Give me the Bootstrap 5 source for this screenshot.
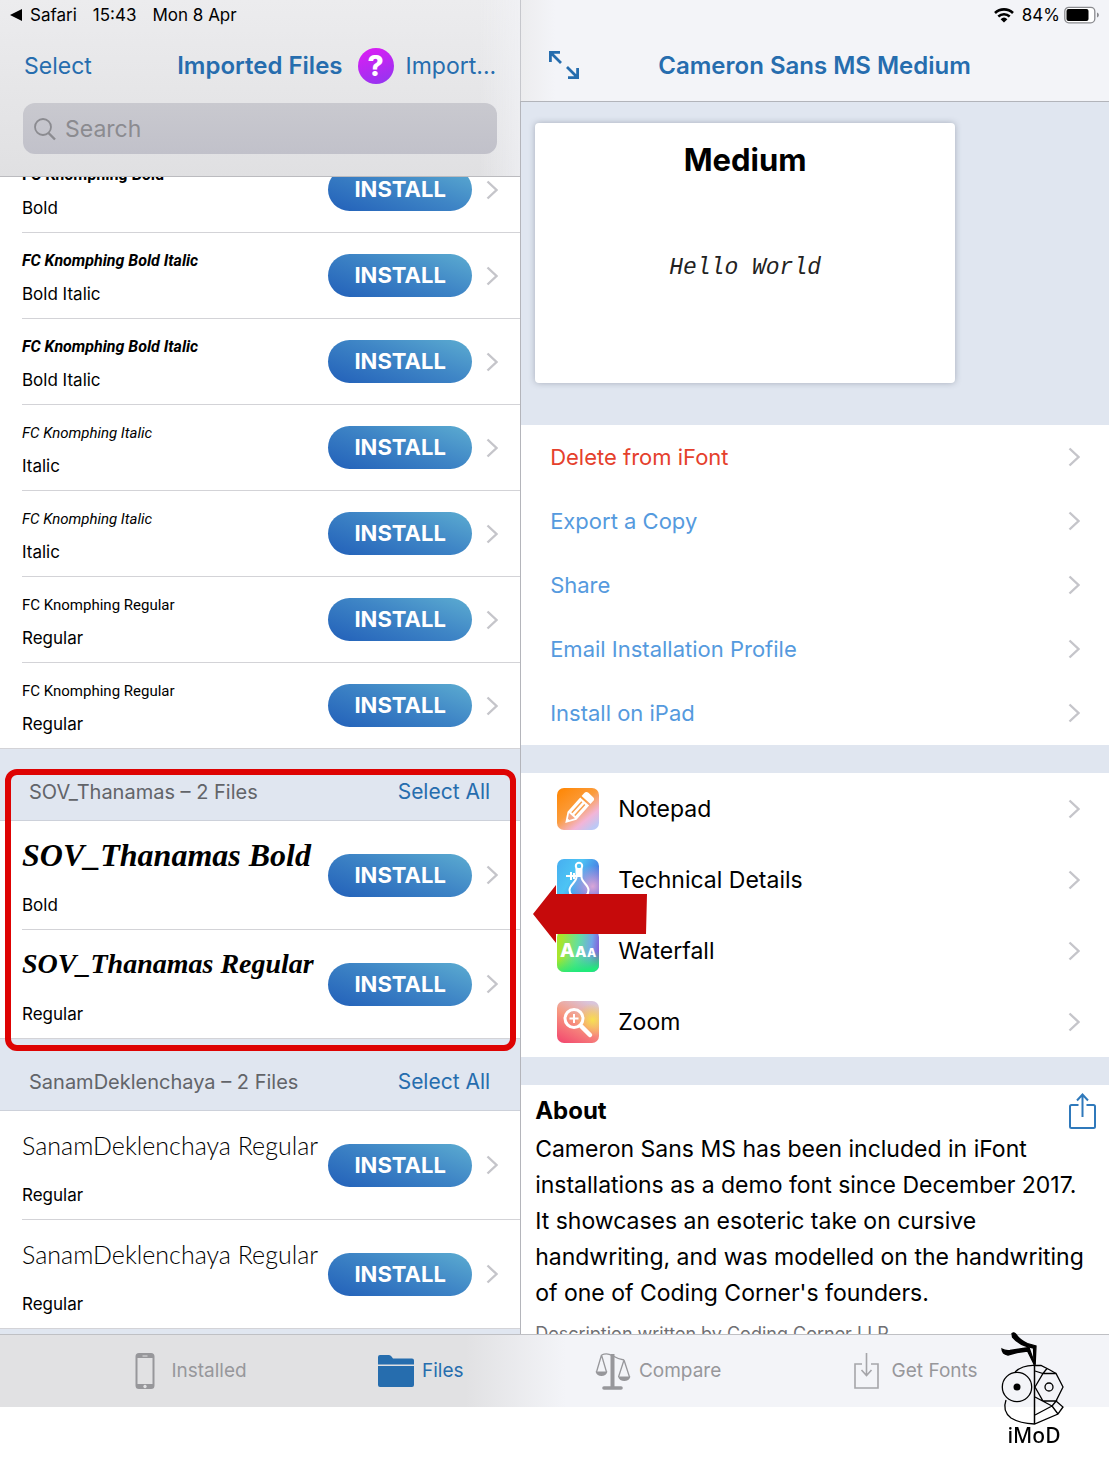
<!DOCTYPE html>
<html lang="en">
<head>
<meta charset="utf-8">
<meta name="viewport" content="width=device-width, initial-scale=1">
<title>iFont – Imported Files</title>
<link href="https://cdn.jsdelivr.net/npm/bootstrap@5.3.0/dist/css/bootstrap.min.css" rel="stylesheet">
<style>
:root{--blue:#266dae;--sky:#559ade;--group:#e0e6f0;--line:#d3d3d7;--bar:#f3f4f8}
body{font-family:Inter,"Liberation Sans",sans-serif;color:#000;background:#fff;font-size:22px;line-height:28px}
a{text-decoration:none}
.app-shell{height:calc(100vh - 72px);min-height:900px}
.split-view{display:grid;grid-template-columns:53fr 60fr;min-height:0}
.pane{min-width:0;min-height:0}
.pane-detail{box-shadow:inset 1px 0 #b4b5bb}
.pane-body{margin-left:1px}
.status-line{font-size:17px;line-height:20px;height:29px;padding:0 8px 0 10px}
.title-line{height:74px}
.bar-files{background:linear-gradient(90deg,rgba(243,244,248,0) 92%,rgba(243,244,248,.6)),linear-gradient(#ececee,#e0e0e2);border-bottom:1px solid #bbbbbf;height:177px}
.bar-detail{background:linear-gradient(90deg,#ececee,var(--bar) 6%);border-bottom:1px solid #b2b4ba;height:102px;box-shadow:inset 1px 0 #c6c7cc}
.text-app{color:var(--blue)}
.app-title{font-size:24px;line-height:28px;font-weight:600;margin:0}
.plain-btn{border:0;background:none;padding:0;color:var(--blue)}
.title-line .plain-btn{font-size:23px}
.expand-btn{position:absolute;left:28px}
.help-btn{width:36px;height:36px;border:0;border-radius:50%;padding:0;margin:0 12px 0 15px;background:linear-gradient(160deg,#e01cf4,#8f36f0);color:#fff;font-weight:800;font-size:28px;line-height:36px}
.search-box{height:51px;margin:0 23px;border-radius:12px;background:linear-gradient(#c9c9cf,#c1c1ca);color:#8b8b90}
.search-box input{border:0;background:none;outline:0;font-size:23px;min-width:0}
.search-box input::placeholder{color:#8b8b90;opacity:1}
.scroll-area{overflow:hidden;background:#fff}
.scrolled{margin-top:-30px}
.font-row{height:86px;margin-left:22px;padding-right:22px;border-bottom:1px solid var(--line);gap:14px}
.font-row.tall{height:109px}
.font-row:last-child{margin-left:0;padding-left:22px}
.row-text{gap:7px;min-width:0;width:0;padding-bottom:2px}
.tall .row-text{gap:18px}
.face{line-height:32px;white-space:nowrap}
.tall .face{line-height:44px}
.style-name{font-size:17px;line-height:20px}
.face-knom{font-family:Roboto,sans-serif;font-size:15px}
.face-knom.fw-bold{font-size:16px}
.face-sov{font-family:"Liberation Serif",serif;font-style:italic;font-weight:700;font-size:32px}
.face-sov.compact{font-size:28px}
.face-sanam{font-family:Lato,sans-serif;font-weight:300;font-size:25px}
.install-btn{width:144px;height:43px;border:0;border-radius:22px;padding:0;flex:none;color:#fff;font-weight:700;font-size:22px;line-height:43px;background:linear-gradient(20deg,#2260b9,#3f86c6 55%,#5cacd1)}
.group-head{height:72px;background:var(--group);border-bottom:1px solid #cdd1da;padding:14px 30px 0 29px}
.group-head h2{font-size:20px;line-height:28px;margin:0;font-weight:400;color:#626469}
.group-head .plain-btn{font-size:21px}
.group-mark{position:absolute;inset:-52px 4px -12px 5px;border:6px solid #de0303;border-radius:12px;pointer-events:none}
.detail-bg{background:var(--group)}
.hero{padding:21px 14px 42px 14px}
.preview-card{width:75%;height:260px;border:0;border-radius:4px;box-shadow:0 0 6px rgba(60,70,90,.35)}
.preview-card h2{font-size:31px;line-height:36px;font-weight:700;margin:19px 0 0}
.hello{font-family:"Liberation Mono",monospace;font-style:italic;font-size:23px;line-height:32px;margin:74px 0 0;color:#222}
.action-row{height:64px;padding:0 29px;color:var(--sky)}
.action-row.danger{color:#e5402c}
.tool-row{height:71px;padding:0 29px 0 36px;gap:19px;color:#000;font-size:23px}
.gap-block{height:28px}
.tool-icon{width:42px;height:42px;flex:none}
.pointer-arrow{position:absolute;left:12px;top:112px;width:114px;height:58px}
.about{padding:7px 12px 0 14px}
.about h2{font-size:24px;line-height:36px;font-weight:700;margin:0}
.about p{font-size:23px;line-height:36px;margin:1px 8px 0 0}
.about .credit{font-size:18px;line-height:24px;color:#6f6f73;margin-top:11px;white-space:nowrap}
.tab-strip{height:73px;flex:none;background:linear-gradient(90deg,#e1e1e3 42%,var(--bar) 51%);border-top:1px solid #bfc0c4;font-size:19px}
.tab-strip a{color:#97979b}
.tab-strip a.current{color:var(--blue)}
.brand-mark{position:fixed;right:38px;bottom:28px;width:75px;height:122px}
</style>
<script src="https://cdn.jsdelivr.net/npm/bootstrap@5.3.0/dist/js/bootstrap.bundle.min.js"></script>
</head>
<body>
<svg width="0" height="0" class="position-absolute" aria-hidden="true">
  <symbol id="chev" viewBox="0 0 12 20"><path d="M1.500 1.500 10.500 10l-9 8.500" fill="none" stroke="#c5c5ca" stroke-width="2.400"/></symbol>
</svg>
<div class="app-shell d-flex flex-column">
  <div class="split-view flex-grow-1">
    <section class="pane d-flex flex-column">
      <header class="bar-files flex-shrink-0">
        <div class="status-line d-flex align-items-center">
          <svg width="12" height="12" viewBox="0 0 12 12" aria-hidden="true"><path d="M0 6 12 0v12z"/></svg>
          <span class="ms-2">Safari</span><span class="ms-3">15:43</span><span class="ms-3">Mon 8 Apr</span>
        </div>
        <div class="title-line d-flex align-items-center px-4">
          <button class="plain-btn">Select</button>
          <h1 class="app-title text-app ms-auto">Imported Files</h1>
          <button class="help-btn" aria-label="Help">?</button>
          <button class="plain-btn">Import...</button>
        </div>
        <label class="search-box d-flex align-items-center">
          <svg class="ms-2 me-2 flex-shrink-0" width="26" height="26" viewBox="0 0 26 26" fill="none" stroke="#8b8b90" stroke-width="1.800" aria-hidden="true"><circle cx="12" cy="11" r="8"/><path d="m17.500 17 6.500 6.500" stroke-width="2.400"/></svg>
          <input class="flex-grow-1 p-0" type="search" placeholder="Search" aria-label="Search">
        </label>
      </header>
      <div class="scroll-area flex-grow-1">
        <ul class="list-unstyled scrolled mb-0">
          <li class="font-row d-flex align-items-center"><div class="row-text d-flex flex-column flex-grow-1"><span class="face face-knom fw-bold">FC Knomphing Bold</span><span class="style-name">Bold</span></div><button class="install-btn">INSTALL</button><svg width="12" height="20"><use href="#chev"/></svg></li>
          <li class="font-row d-flex align-items-center"><div class="row-text d-flex flex-column flex-grow-1"><span class="face face-knom fw-bold fst-italic">FC Knomphing Bold Italic</span><span class="style-name">Bold Italic</span></div><button class="install-btn">INSTALL</button><svg width="12" height="20"><use href="#chev"/></svg></li>
          <li class="font-row d-flex align-items-center"><div class="row-text d-flex flex-column flex-grow-1"><span class="face face-knom fw-bold fst-italic">FC Knomphing Bold Italic</span><span class="style-name">Bold Italic</span></div><button class="install-btn">INSTALL</button><svg width="12" height="20"><use href="#chev"/></svg></li>
          <li class="font-row d-flex align-items-center"><div class="row-text d-flex flex-column flex-grow-1"><span class="face face-knom fst-italic">FC Knomphing Italic</span><span class="style-name">Italic</span></div><button class="install-btn">INSTALL</button><svg width="12" height="20"><use href="#chev"/></svg></li>
          <li class="font-row d-flex align-items-center"><div class="row-text d-flex flex-column flex-grow-1"><span class="face face-knom fst-italic">FC Knomphing Italic</span><span class="style-name">Italic</span></div><button class="install-btn">INSTALL</button><svg width="12" height="20"><use href="#chev"/></svg></li>
          <li class="font-row d-flex align-items-center"><div class="row-text d-flex flex-column flex-grow-1"><span class="face face-knom">FC Knomphing Regular</span><span class="style-name">Regular</span></div><button class="install-btn">INSTALL</button><svg width="12" height="20"><use href="#chev"/></svg></li>
          <li class="font-row d-flex align-items-center"><div class="row-text d-flex flex-column flex-grow-1"><span class="face face-knom">FC Knomphing Regular</span><span class="style-name">Regular</span></div><button class="install-btn">INSTALL</button><svg width="12" height="20"><use href="#chev"/></svg></li>
        </ul>
        <div class="group-head d-flex justify-content-between align-items-center"><h2>SOV_Thanamas – 2 Files</h2><button class="plain-btn">Select All</button></div>
        <div class="position-relative">
          <ul class="list-unstyled mb-0">
            <li class="font-row tall d-flex align-items-center"><div class="row-text d-flex flex-column flex-grow-1"><span class="face face-sov">SOV_Thanamas Bold</span><span class="style-name">Bold</span></div><button class="install-btn">INSTALL</button><svg width="12" height="20"><use href="#chev"/></svg></li>
            <li class="font-row tall d-flex align-items-center"><div class="row-text d-flex flex-column flex-grow-1"><span class="face face-sov compact">SOV_Thanamas Regular</span><span class="style-name">Regular</span></div><button class="install-btn">INSTALL</button><svg width="12" height="20"><use href="#chev"/></svg></li>
          </ul>
          <div class="group-mark" aria-hidden="true"></div>
        </div>
        <div class="group-head d-flex justify-content-between align-items-center"><h2>SanamDeklenchaya – 2 Files</h2><button class="plain-btn">Select All</button></div>
        <ul class="list-unstyled mb-0">
          <li class="font-row tall d-flex align-items-center"><div class="row-text d-flex flex-column flex-grow-1"><span class="face face-sanam">SanamDeklenchaya Regular</span><span class="style-name">Regular</span></div><button class="install-btn">INSTALL</button><svg width="12" height="20"><use href="#chev"/></svg></li>
          <li class="font-row tall d-flex align-items-center"><div class="row-text d-flex flex-column flex-grow-1"><span class="face face-sanam">SanamDeklenchaya Regular</span><span class="style-name">Regular</span></div><button class="install-btn">INSTALL</button><svg width="12" height="20"><use href="#chev"/></svg></li>
        </ul>
        <div class="group-head"></div>
      </div>
    </section>

    <section class="pane d-flex flex-column">
      <header class="bar-detail flex-shrink-0">
        <div class="status-line d-flex align-items-center justify-content-end gap-1">
          <svg width="20" height="16" viewBox="0 0 20 16" fill="none" stroke="#000" stroke-width="2.600" aria-hidden="true"><path d="M1 6a13 13 0 0 1 18 0M4.300 9.500a8.500 8.500 0 0 1 11.400 0"/><path d="m10 15.500-3.400-3.300a5 5 0 0 1 6.800 0z" fill="#000" stroke="none"/></svg>
          <span class="ms-1">84%</span>
          <svg width="37" height="18" viewBox="0 0 37 18" aria-hidden="true"><rect x=".8" y="1.300" width="30" height="15.500" rx="4" fill="#fff" stroke="#8a8b8f" stroke-width="1.300"/><rect x="2.500" y="3" width="22" height="12" rx="2"/><path d="M33 6.500c2.500.8 2.500 4.200 0 5z" fill="#8a8b8f"/></svg>
        </div>
        <div class="title-line d-flex align-items-center position-relative">
          <button class="plain-btn expand-btn d-flex" aria-label="Full screen"><svg width="32" height="32" viewBox="0 0 32 32" fill="none" stroke="#266dae" stroke-width="2.800"><path d="M2.400 12V2.400H12M3 3l10 10M29.600 18v9.600H20M29 27 19 17"/></svg></button>
          <h1 class="app-title text-app mx-auto">Cameron Sans MS Medium</h1>
        </div>
      </header>
      <div class="scroll-area pane-detail flex-grow-1">
        <div class="pane-body">
        <div class="detail-bg hero">
          <div class="preview-card card text-center"><h2>Medium</h2><p class="hello">Hello World</p></div>
        </div>
        <nav aria-label="Actions">
          <a href="#" class="action-row danger d-flex align-items-center justify-content-between">Delete from iFont<svg width="12" height="20"><use href="#chev"/></svg></a>
          <a href="#" class="action-row d-flex align-items-center justify-content-between">Export a Copy<svg width="12" height="20"><use href="#chev"/></svg></a>
          <a href="#" class="action-row d-flex align-items-center justify-content-between">Share<svg width="12" height="20"><use href="#chev"/></svg></a>
          <a href="#" class="action-row d-flex align-items-center justify-content-between">Email Installation Profile<svg width="12" height="20"><use href="#chev"/></svg></a>
          <a href="#" class="action-row d-flex align-items-center justify-content-between">Install on iPad<svg width="12" height="20"><use href="#chev"/></svg></a>
        </nav>
        <div class="gap-block detail-bg"></div>
        <nav class="position-relative" aria-label="Tools">
          <a href="#" class="tool-row d-flex align-items-center">
            <svg class="tool-icon" viewBox="0 0 42 42"><defs><linearGradient id="n1" x2=".8" y2="1"><stop stop-color="#ff8500"/><stop offset=".5" stop-color="#fb9c3c"/><stop offset=".8" stop-color="#f2b5d8"/><stop offset="1" stop-color="#bcc8f5"/></linearGradient></defs><rect width="42" height="42" rx="7" fill="url(#n1)"/><g transform="rotate(42 21 21)"><path d="M15 5q0-3 3-3h6q3 0 3 3v4H15zM15 11h12v19l-6 10-6-10z" fill="#fff"/><path d="M19 13v15M23 13v15" stroke="#f9a04e" stroke-width="1.500"/><path d="M17 30h8l-3 5h-2z" fill="#f6a884"/></g></svg>
            <span class="me-auto">Notepad</span><svg width="12" height="20"><use href="#chev"/></svg></a>
          <a href="#" class="tool-row d-flex align-items-center">
            <svg class="tool-icon" viewBox="0 0 42 42"><defs><linearGradient id="t1" y2=".6"><stop stop-color="#47aef0"/><stop offset=".45" stop-color="#4dc4f4"/><stop offset="1" stop-color="#465fdc"/></linearGradient><radialGradient id="t2" cx=".85" cy=".65" r=".5"><stop stop-color="#d9a6d8"/><stop offset="1" stop-color="#d9a6d8" stop-opacity="0"/></radialGradient></defs><rect width="42" height="42" rx="7" fill="url(#t1)"/><rect width="42" height="42" rx="7" fill="url(#t2)"/><g fill="none" stroke="#fff" stroke-width="2"><circle cx="22" cy="7" r="3.200"/><path d="M19.500 10v8c0 5-7 8-7 13 0 5 4 7 9.500 7s9.500-2 9.500-7-7-8-7-13v-8z"/><path d="M9 17h10M14 13v8M17 14v6"/></g><path d="M20 10h4v8h-4z" fill="#fff"/></svg>
            <span class="me-auto">Technical Details</span><svg width="12" height="20"><use href="#chev"/></svg></a>
          <a href="#" class="tool-row d-flex align-items-center">
            <svg class="tool-icon" viewBox="0 0 42 42"><defs><linearGradient id="w1" x1=".1" y1=".3" x2="1" y2=".4"><stop stop-color="#a7e52e"/><stop offset=".45" stop-color="#63dfa0"/><stop offset=".8" stop-color="#72a4e8"/><stop offset="1" stop-color="#8261d8"/></linearGradient><linearGradient id="w2" x1=".3" x2=".5" y2="1"><stop offset=".6" stop-color="#2fe766" stop-opacity="0"/><stop offset="1" stop-color="#20ea7a"/></linearGradient></defs><rect width="42" height="42" rx="7" fill="url(#w1)"/><rect width="42" height="42" rx="7" fill="url(#w2)"/><g fill="#fff" font-family="Inter, sans-serif" font-weight="800"><text x="3" y="27" font-size="19">A</text><text x="18" y="27" font-size="15">A</text><text x="30" y="27" font-size="12">A</text></g></svg>
            <span class="me-auto">Waterfall</span><svg width="12" height="20"><use href="#chev"/></svg></a>
          <a href="#" class="tool-row d-flex align-items-center">
            <svg class="tool-icon" viewBox="0 0 42 42"><defs><linearGradient id="z1" x1=".2" y1="1" x2=".7" y2="0"><stop stop-color="#f34e70"/><stop offset=".55" stop-color="#f79a80"/><stop offset="1" stop-color="#d9c5dc"/></linearGradient><radialGradient id="z2" cx=".85" cy=".45" r=".4"><stop stop-color="#f8e04e"/><stop offset="1" stop-color="#f8d04e" stop-opacity="0"/></radialGradient></defs><rect width="42" height="42" rx="7" fill="url(#z1)"/><rect width="42" height="42" rx="7" fill="url(#z2)"/><g fill="none" stroke="#fff"><circle cx="17" cy="17.500" r="9" stroke-width="3"/><path d="m24 25 9 9" stroke-width="4.500" stroke-linecap="round"/><path d="M12.500 17.500h9M17 13v9" stroke-width="2"/></g></svg>
            <span class="me-auto">Zoom</span><svg width="12" height="20"><use href="#chev"/></svg></a>
          <svg class="pointer-arrow" viewBox="0 0 114 58" preserveAspectRatio="none" aria-hidden="true"><path d="M0 29 23 0v9h91l-1 40H23v9z" fill="#c60a0b"/></svg>
        </nav>
        <div class="gap-block detail-bg"></div>
        <article class="about">
          <div class="d-flex align-items-center justify-content-between"><h2>About</h2>
            <button class="plain-btn d-flex" aria-label="Share"><svg width="29" height="38" viewBox="0 0 29 38" fill="none" stroke="#2f79bb" stroke-width="2"><path d="M10.500 13H3.500Q2 13 2 14.500v20Q2 36 3.500 36h22q1.500 0 1.500-1.500v-20q0-1.500-1.500-1.500h-7M14.500 25V2.500M9 8.500l5.500-6 5.500 6"/></svg></button></div>
          <p>Cameron Sans MS has been included in iFont installations as a demo font since December 2017. It showcases an esoteric take on cursive handwriting, and was modelled on the handwriting of one of Coding Corner's founders.</p>
          <p class="credit">Description written by Coding Corner LLP</p>
        </article>
        </div>
      </div>
    </section>
  </div>
  <nav class="tab-strip d-flex align-items-center justify-content-evenly" aria-label="Sections">
    <a href="#" class="d-flex align-items-center gap-3 ps-1"><svg width="20" height="36" viewBox="0 0 20 36"><path fill="#97979b" fill-rule="evenodd" d="M4 0h12q3.500 0 3.500 3.500v29Q19.500 36 16 36H4Q.5 36 .5 32.500v-29Q.5 0 4 0zM2.500 5v26h15V5zM7.500 2.500v1h5v-1zM10 31.800a1.700 1.700 0 1 0 .01 0z"/></svg>Installed</a>
    <a href="#" class="current d-flex align-items-center gap-2" aria-current="page"><svg width="36" height="32" viewBox="0 0 36 32" fill="#266dae"><path d="M0 9.500V2Q0 0 2 0h9q1.500 0 2.500 1.500l1.500 2h19q2 0 2 2v4zM0 11h36v19q0 2-2 2H2q-2 0-2-2z"/></svg>Files</a>
    <a href="#" class="d-flex align-items-center gap-2"><svg width="36" height="38" viewBox="0 0 36 38" fill="none" stroke="#97979b" stroke-width="1.300"><path d="M17.500 2v34" stroke-width="4"/><path d="M9 36h17" stroke-width="3.600" stroke-linecap="round"/><path d="M6.500 3Q12 .5 17 3.500T29 8M6.500 3 1.500 20M6.500 3l5 17M29 8l-5.500 17M29 8l5.500 17"/><path d="M.5 19.500h12c-1.500 6-10.500 6-12 0zM23 24.500h12.500c-1.500 6-11 6-12.500 0z" fill="#97979b" stroke="none"/></svg>Compare</a>
    <a href="#" class="d-flex align-items-center gap-2"><svg class="me-1" width="27" height="38" viewBox="0 0 27 38" fill="none" stroke="#a5a5a9" stroke-width="1.600"><path d="M9 12H2v24h23V12h-7M13.500 1v22M8.500 18l5 5.500 5-5.500"/></svg>Get Fonts</a>
  </nav>
</div>
<svg class="brand-mark" viewBox="0 0 75 122" fill="none" stroke="#000" stroke-width="1.300" role="img" aria-label="iMoD">
  <path d="M16 4.500q2-1.500 3.500.5 5 7 12 9.500l8.500 2.500-.8 18h-1.200L37.500 19Q23 16.500 16.500 8z" fill="#000"/>
  <path d="M6 20q3 2 8 1.500L33 18.500 38.800 35H38L31.500 22 21 23.500 12 26Q6 25 6 20z" fill="#000"/>
  <circle cx="21" cy="58" r="14.700"/><circle cx="21" cy="58" r="3.500" fill="#000" stroke="none"/>
  <path d="M19 43Q27 36 38.500 36.500h6.500L54 41l6 3.500M10 71Q6 82 15 89 24 94.500 38.500 95L62 85l5-7-7-6"/>
  <path d="m39 58 8-13.500h13L67 58l-7 14H47zM39 42l8 2.500 4-5M56 77l6 8M56 77l-17 9M56 77l5-6M39 68l17 9"/>
  <circle cx="53" cy="58" r="4"/><path d="M38.500 36.500V95" stroke-width="1.500"/>
  <text x="38" y="114" text-anchor="middle" font-family="Noto Sans, sans-serif" font-weight="500" font-size="21" fill="#000" stroke="none">iMoD</text>
</svg>
</body>
</html>
